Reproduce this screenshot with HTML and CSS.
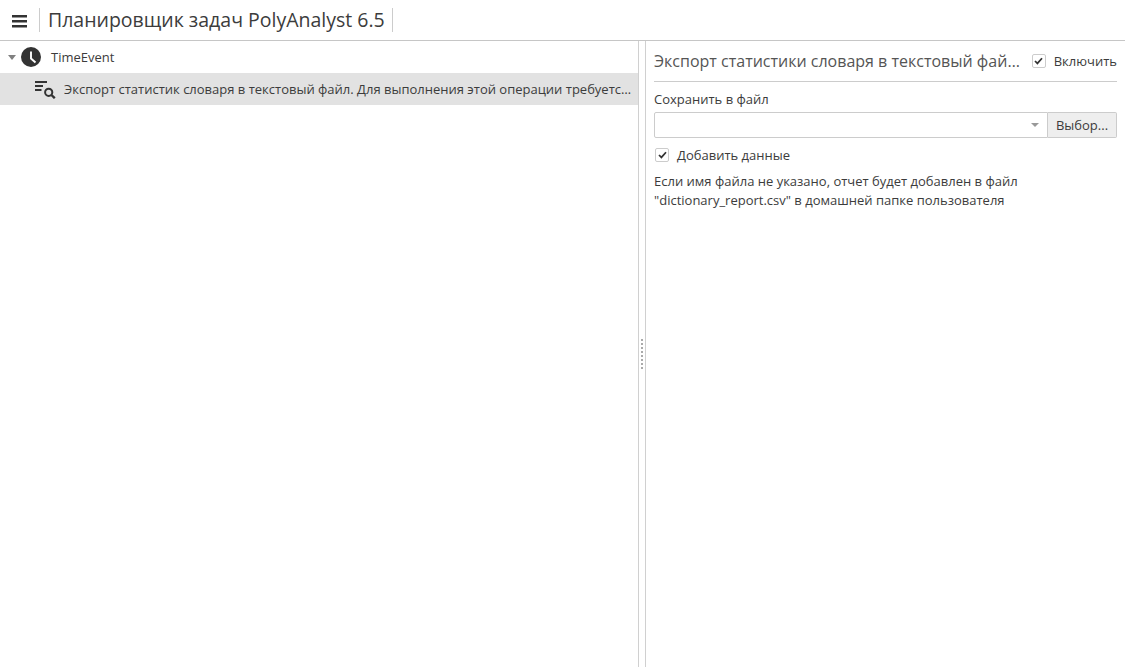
FILE: index.html
```html
<!DOCTYPE html>
<html lang="ru">
<head>
    <meta charset="UTF-8">
    <title>Планировщик задач PolyAnalyst 6.5</title>
    <link rel="stylesheet" href="styles.css">
</head>
<body>
    <div class="wrapper">
        <div class="topbar">
            <svg class="menu-icon" width="15" height="16" viewBox="0 0 15 16">
                <path d="M0 3h15v2.4H0zM0 8h15v2.4H0zM0 13h15v2.4H0z" fill="#333"/>
            </svg>
            <h1 class="title">Планировщик задач PolyAnalyst 6.5</h1>
        </div>
        <div class="content">
            <div class="left-pane">
                <div class="tree-row">
                    <span class="arrow"></span>
                    <svg class="clock" width="20" height="20" viewBox="0 0 20 20">
                        <circle cx="10" cy="10" r="10" fill="#333"/>
                        <path d="M10 4.5V11.5L14.5 15.5" fill="none" stroke="#fff" stroke-width="1.9"/>
                    </svg>
                    <span class="tree-label">TimeEvent</span>
                </div>
                <div class="task-row">
                    <svg class="task-icon" width="21" height="20" viewBox="0 0 21 20">
                        <path d="M0 2h12v2H0zM0 6h8v2H0zM0 10h6.5v2H0z" fill="#333"/>
                        <circle cx="13.7" cy="13.3" r="3.6" fill="none" stroke="#333" stroke-width="2"/>
                        <path d="M16.4 16l3.4 3.2" fill="none" stroke="#333" stroke-width="2.4"/>
                    </svg>
                    <span class="task-label">Экспорт статистик словаря в текстовый файл. Для выполнения этой операции требуется подключение к словарю</span>
                </div>
            </div>
            <div class="splitter"><span class="grip"></span></div>
            <div class="right-pane">
                <div class="panel-head">
                    <span class="panel-title">Экспорт статистики словаря в текстовый файл. Для выполнения этой операции</span>
                    <label class="check">
                        <span class="box"><svg width="9" height="8" viewBox="0 0 9 8"><path d="M1 4l2.4 2.4L8 1.2" fill="none" stroke="#333" stroke-width="1.7"/></svg></span>
                        Включить
                    </label>
                </div>
                <div class="field-label">Сохранить в файл</div>
                <div class="file-row">
                    <div class="combo"><span class="combo-arrow"></span></div>
                    <button class="pick-btn">Выбор...</button>
                </div>
                <label class="check append">
                    <span class="box"><svg width="9" height="8" viewBox="0 0 9 8"><path d="M1 4l2.4 2.4L8 1.2" fill="none" stroke="#333" stroke-width="1.7"/></svg></span>
                    Добавить данные
                </label>
                <p class="note">Если имя файла не указано, отчет будет добавлен в файл<br>"dictionary_report.csv" в домашней папке пользователя</p>
            </div>
        </div>
    </div>
</body>
</html>
```

FILE: styles.css
```css
html, body{
    height: 100%;
}
body{
    margin: 0;
    background-color: #fff;
    color: #3c3c3c;
    font-family: "Open Sans", "Noto Sans", sans-serif;
    font-size: 13px;
    overflow: hidden;
}
.wrapper{
    display: flex;
    flex-direction: column;
    height: 667px;
}
.topbar{
    display: flex;
    align-items: center;
    height: 40px;
    flex: none;
    border-bottom: 1px solid #c6c6c6;
    padding-left: 12px;
}
.menu-icon{
    flex: none;
    margin-right: 12px;
}
.title{
    margin: 0;
    padding: 0 7px 0 8px;
    height: 24px;
    line-height: 24px;
    border-left: 1px solid #ccc;
    border-right: 1px solid #ccc;
    font-size: 19.5px;
    font-weight: 400;
    white-space: nowrap;
}
.content{
    display: flex;
    flex: 1;
    min-height: 0;
}
.left-pane{
    width: 638px;
    flex: none;
}
.tree-row{
    display: flex;
    align-items: center;
    height: 32px;
    padding-left: 8px;
}
.arrow{
    width: 0;
    height: 0;
    border-left: 4px solid transparent;
    border-right: 4px solid transparent;
    border-top: 5px solid #808080;
    margin-right: 5px;
}
.clock{
    flex: none;
    margin-right: 10px;
}
.task-row{
    display: flex;
    align-items: center;
    height: 32px;
    background-color: #e2e2e2;
    padding-left: 35px;
}
.task-icon{
    flex: none;
    margin-right: 8px;
}
.task-label{
    white-space: nowrap;
    overflow: hidden;
    text-overflow: ellipsis;
    padding-right: 6px;
}
.splitter{
    width: 6px;
    flex: none;
    border-left: 1px solid #d0d0d0;
    border-right: 1px solid #d0d0d0;
    display: flex;
    align-items: center;
    justify-content: center;
}
.grip{
    width: 2px;
    height: 30px;
    background: repeating-linear-gradient(to bottom, #aaa 0, #aaa 2px, transparent 2px, transparent 4px);
}
.right-pane{
    flex: 1;
    min-width: 0;
    padding: 0 8px 0 8px;
}
.panel-head{
    display: flex;
    align-items: center;
    height: 40px;
    border-bottom: 1px solid #ccc;
}
.panel-title{
    flex: 1;
    min-width: 0;
    font-size: 16px;
    color: #555;
    white-space: nowrap;
    overflow: hidden;
    text-overflow: ellipsis;
    margin-right: 9px;
}
.check{
    display: flex;
    align-items: center;
    white-space: nowrap;
}
.box{
    display: flex;
    align-items: center;
    justify-content: center;
    width: 12px;
    height: 12px;
    border: 1px solid #ccc;
    border-radius: 2px;
    margin-right: 8px;
}
.field-label{
    margin-top: 9px;
    line-height: 17px;
}
.file-row{
    display: flex;
    height: 26px;
    margin-top: 4px;
}
.combo{
    flex: 1;
    display: flex;
    align-items: center;
    justify-content: flex-end;
    border: 1px solid #ccc;
    border-radius: 2px 0 0 2px;
    padding-right: 8px;
}
.combo-arrow{
    width: 0;
    height: 0;
    border-left: 4px solid transparent;
    border-right: 4px solid transparent;
    border-top: 4px solid #999;
}
.pick-btn{
    width: 69px;
    border: 1px solid #ccc;
    border-left: none;
    border-radius: 0 2px 2px 0;
    background-color: #eee;
    color: #3c3c3c;
    font-family: inherit;
    font-size: 13px;
    padding: 0;
}
.append{
    margin-top: 8px;
    padding-left: 1px;
    height: 17px;
}
.note{
    margin: 9px 0 0 0;
    line-height: 19px;
}
```
